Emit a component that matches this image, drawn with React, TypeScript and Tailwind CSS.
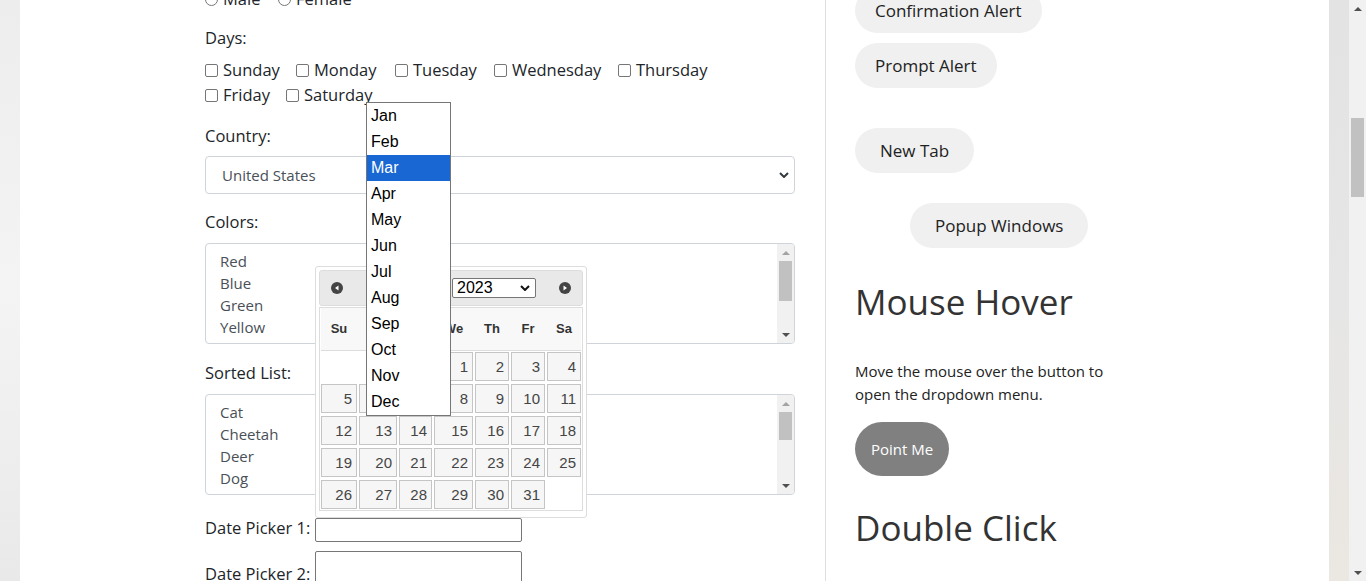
import React from 'react';

const days: (number | null)[] = [
  null, null, null, 1, 2, 3, 4,
  5, 6, 7, 8, 9, 10, 11,
  12, 13, 14, 15, 16, 17, 18,
  19, 20, 21, 22, 23, 24, 25,
  26, 27, 28, 29, 30, 31, null,
];

const months = ['Jan', 'Feb', 'Mar', 'Apr', 'May', 'Jun', 'Jul', 'Aug', 'Sep', 'Oct', 'Nov', 'Dec'];
const weekdays = ['Su', 'Mo', 'Tu', 'We', 'Th', 'Fr', 'Sa'];

const Arrow = ({ up, light }: { up?: boolean; light?: boolean }) => (
  <svg width="8" height="4" viewBox="0 0 8 4">
    <polygon points={up ? '0,4 8,4 4,0' : '0,0 8,0 4,4'} fill={light ? '#a3a3a3' : '#505050'} />
  </svg>
);

const Scrollbar = ({ thumb }: { thumb: string }) => (
  <div className="flex w-[17px] shrink-0 flex-col bg-[#f1f1f1]">
    <div className="flex h-[17px] shrink-0 items-center justify-center">
      <Arrow up light />
    </div>
    <div className="flex-1 px-[2px]">
      <div className={`${thumb} w-full bg-[#c1c1c1]`} />
    </div>
    <div className="flex h-[17px] shrink-0 items-center justify-center">
      <Arrow />
    </div>
  </div>
);

const ListBox = ({ items, thumb }: { items: string[]; thumb: string }) => (
  <div className="flex h-[101px] overflow-hidden rounded-[4px] border border-[#ced4da] bg-white">
    <div className="flex-1 overflow-hidden pt-[6px] pl-[14px] text-[15px] leading-[22px] text-[#495057]">
      {items.map((it, i) => (
        <div key={i}>{it}</div>
      ))}
    </div>
    <Scrollbar thumb={thumb} />
  </div>
);

const Check = ({ label, w }: { label: string; w: string }) => (
  <div className={`flex items-center ${w}`}>
    <span className="h-[13px] w-[13px] shrink-0 rounded-[2px] border border-[#767676] bg-white" />
    <span className="ml-[5px]">{label}</span>
  </div>
);

const Radio = ({ label, w }: { label: string; w: string }) => (
  <div className={`flex items-center ${w}`}>
    <span className="h-[13px] w-[13px] shrink-0 rounded-full border border-[#767676] bg-white" />
    <span className="ml-[5px]">{label}</span>
  </div>
);

const NavIcon = ({ next }: { next?: boolean }) => (
  <svg width="12" height="12" viewBox="0 0 12 12" className="shrink-0">
    <circle cx="6" cy="6" r="6" fill="#444444" />
    <polygon points={next ? '4.5,3.5 4.5,8.5 8,6' : '7.5,3.5 7.5,8.5 4,6'} fill="#ffffff" />
  </svg>
);

const Chevron = ({ color }: { color: string }) => (
  <svg width="10" height="6" viewBox="0 0 10 6">
    <path d="M1 1 L5 5 L9 1" fill="none" stroke={color} strokeWidth="2" />
  </svg>
);

const DatePicker = () => (
  <div className="absolute left-[295px] top-[266px] z-10 h-[252px] w-[272px] rounded-[3px] border border-[#dddddd] bg-white p-[3px] font-['Liberation_Sans',Arial,sans-serif]">
    <div className="flex h-[36px] items-center rounded-[3px] border border-[#dddddd] bg-[#e9e9e9]">
      <div className="ml-[11px]">
        <NavIcon />
      </div>
      <div className="ml-[25px] flex h-[20px] w-[80px] items-center justify-between rounded-[2px] border border-[#767676] bg-white px-[3px] text-[16px]">
        <span>Mar</span>
        <Chevron color="#111" />
      </div>
      <div className="ml-[4px] flex h-[20px] w-[84px] items-center justify-between rounded-[2px] border border-[#767676] bg-white pl-[4px] pr-[5px] text-[16px] text-black">
        <span>2023</span>
        <Chevron color="#111" />
      </div>
      <div className="ml-[23px]">
        <NavIcon next />
      </div>
    </div>
    <div className="mt-px border border-[#dddddd] px-px pb-px">
      <div className="grid h-[43px] grid-cols-[36px_38px_33px_39px_34px_34px_34px] items-center gap-x-[2px] border-b border-[#dddddd] bg-[#f8f8f8] text-center text-[13px] font-bold text-[#333]">
        {weekdays.map((d) => (
          <span key={d}>{d}</span>
        ))}
      </div>
      <div className="mt-px grid grid-cols-[36px_38px_33px_39px_34px_34px_34px] gap-x-[2px] gap-y-[3px]">
        {days.map((d, i) =>
          d === null ? (
            <div key={i} className="h-[29px]" />
          ) : (
            <div
              key={i}
              className="h-[29px] border border-[#c5c5c5] bg-[#f6f6f6] pr-[4px] text-right text-[15px] leading-[27px] text-[#454545]"
            >
              {d}
            </div>
          )
        )}
      </div>
    </div>
  </div>
);

const MonthList = () => (
  <div className="absolute left-[346px] top-[102px] z-20 w-[85px] border border-[#767676] bg-white font-['Liberation_Sans',Arial,sans-serif] text-[16px] text-black">
    {months.map((m) => (
      <div
        key={m}
        className={m === 'Mar' ? 'h-[26px] bg-[#1967d2] pl-[4px] leading-[26px] text-white' : 'h-[26px] pl-[4px] leading-[26px]'}
      >
        {m}
      </div>
    ))}
  </div>
);

const Pill = ({ label, cls }: { label: string; cls: string }) => (
  <button className={`h-[45px] shrink-0 self-start rounded-full bg-[#f0f0f0] text-[17px] leading-[45px] text-[#222] ${cls}`}>
    {label}
  </button>
);

export default function App() {
  return (
    <div className="flex h-[581px] w-[1366px] overflow-hidden font-['Open_Sans',sans-serif]">
      <div className="w-[20px] shrink-0 bg-linear-to-b from-[#ededed] via-[#f4f4f4] to-[#e9e9e9]" />

      <main className="relative flex h-[581px] w-[1309px] shrink-0 items-start overflow-hidden bg-white">
        {/* left form column */}
        <div className="ml-[185px] flex w-[590px] shrink-0 flex-col text-[16.5px] text-[#212529] *:shrink-0">
          <div className="-mt-[13px] flex h-[24px] items-center leading-[24px]">
            <Radio label="Male" w="w-[73px]" />
            <Radio label="Female" w="w-[90px]" />
          </div>

          <div className="mt-[15px] leading-[24px]">Days:</div>
          <div className="mt-[8px] flex h-[25px] items-center">
            <Check label="Sunday" w="w-[91px]" />
            <Check label="Monday" w="w-[99px]" />
            <Check label="Tuesday" w="w-[99px]" />
            <Check label="Wednesday" w="w-[124px]" />
            <Check label="Thursday" w="w-[100px]" />
          </div>
          <div className="flex h-[25px] items-center">
            <Check label="Friday" w="w-[81px]" />
            <Check label="Saturday" w="w-[100px]" />
          </div>

          <div className="mt-[16px] leading-[24px]">Country:</div>
          <div className="mt-[8px] flex h-[38px] items-center justify-between rounded-[4px] border border-[#ced4da] bg-white pl-[16px] pr-[5px] text-[15px] text-[#495057]">
            <span>United States</span>
            <Chevron color="#343a40" />
          </div>

          <div className="mt-[16px] leading-[24px]">Colors:</div>
          <div className="mt-[9px]">
            <ListBox items={['Red', 'Blue', 'Green', 'Yellow', 'Red', 'White', 'Green']} thumb="h-[40px]" />
          </div>

          <div className="mt-[17px] leading-[24px]">Sorted List:</div>
          <div className="mt-[9px]">
            <ListBox
              items={['Cat', 'Cheetah', 'Deer', 'Dog', 'Elephant', 'Fox', 'Giraffe', 'Lion', 'Rabbit', 'Zebra']}
              thumb="h-[28px]"
            />
          </div>

          <div className="mt-[23px] flex items-start">
            <span className="w-[110px] leading-[20px]">Date Picker 1:</span>
            <div className="h-[24px] w-[207px] rounded-[2px] border border-[#767676] bg-white" />
          </div>
          <div className="mt-[9px] flex items-start">
            <span className="mt-[13px] w-[110px] leading-[20px]">Date Picker 2:</span>
            <div className="h-[40px] w-[207px] rounded-[2px] border border-[#767676] bg-white" />
          </div>
        </div>

        <div className="ml-[30px] h-[581px] w-px shrink-0 bg-[#dedede]" />

        {/* right column */}
        <div className="ml-[29px] flex w-[270px] shrink-0 flex-col *:shrink-0">
          <div className="-mt-[12px] flex flex-col">
            <Pill label="Confirmation Alert" cls="px-[20px]" />
            <Pill label="Prompt Alert" cls="mt-[10px] px-[20px]" />
            <Pill label="New Tab" cls="mt-[40px] px-[25px]" />
            <Pill label="Popup Windows" cls="ml-[55px] mt-[30px] px-[25px]" />
          </div>

          <h2 className="mt-[33px] text-[35px] leading-[42px] font-normal text-[#333]">Mouse Hover</h2>
          <p className="mt-[37px] text-[15px] leading-[23px] text-[#222]">
            Move the mouse over the button to open the dropdown menu.
          </p>
          <button className="mt-[16px] h-[54px] self-start rounded-full bg-[#808080] px-[16px] text-[15px] text-white">
            Point Me
          </button>
          <h2 className="mt-[31px] text-[35px] leading-[42px] font-normal text-[#333]">Double Click</h2>
        </div>

        <DatePicker />
        <MonthList />
      </main>

      <div className="w-[20px] shrink-0 bg-linear-to-b from-[#e3e3e3] via-[#e6e6e6] to-[#ebe7e1]" />

      <div className="flex w-[17px] shrink-0 flex-col bg-[#f1f1f1]">
        <div className="flex h-[17px] items-center justify-center">
          <Arrow up />
        </div>
        <div className="flex-1 px-[2px] pt-[101px]">
          <div className="h-[79px] w-full bg-[#c1c1c1]" />
        </div>
        <div className="flex h-[17px] items-center justify-center">
          <Arrow />
        </div>
      </div>
    </div>
  );
}
